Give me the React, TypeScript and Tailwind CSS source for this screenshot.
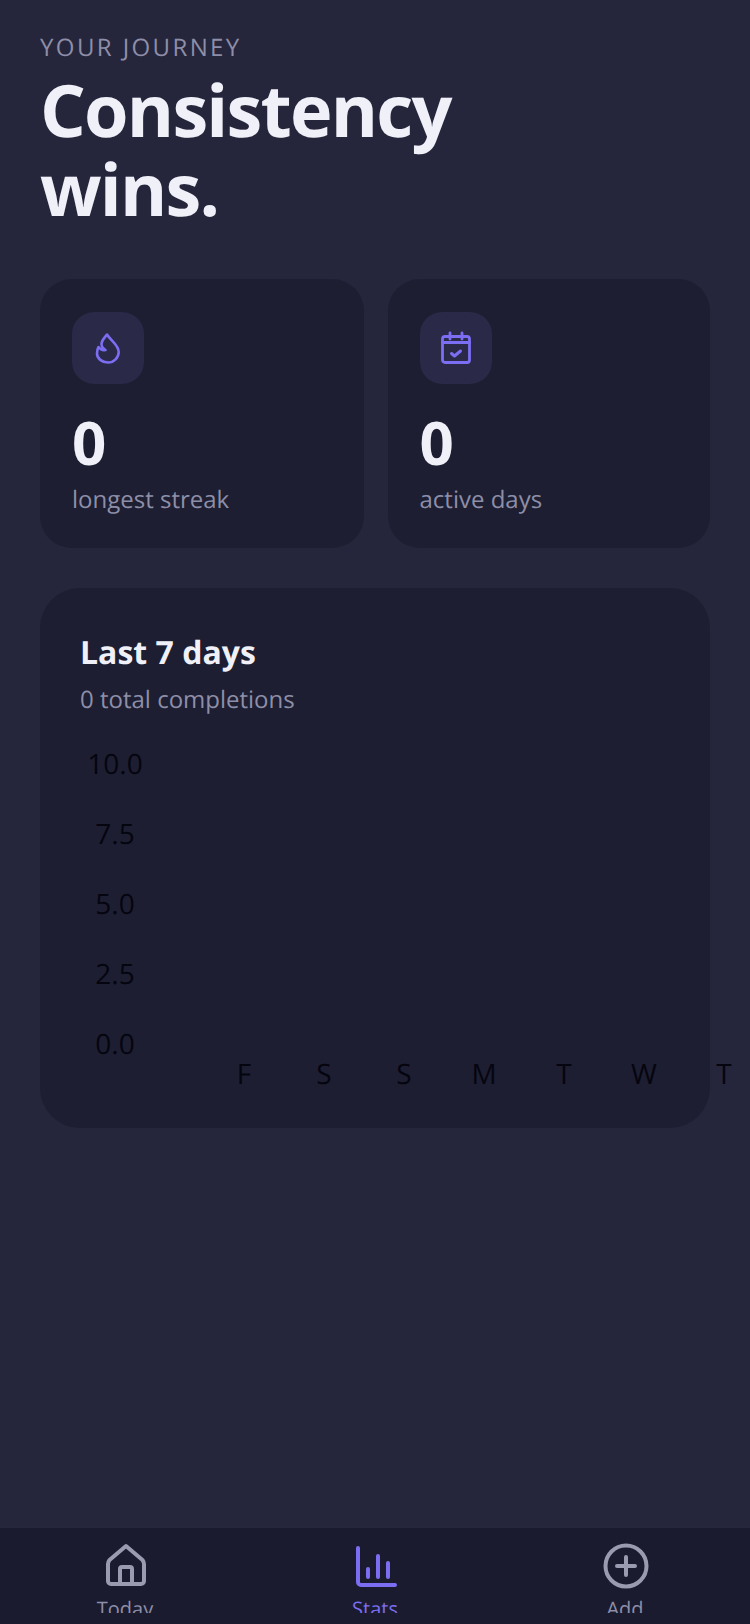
function Flame() {
  return (
    <svg width="30" height="36" viewBox="0 0 30 36" fill="none" stroke="#7c6ef2" strokeWidth="2.600" strokeLinecap="round" strokeLinejoin="round" className="shrink-0">
      <path d="M14 4.500C11.500 8 8.500 10 8.500 14C8.500 16.500 10 18.500 12.500 20C9.500 20.500 7 19 5.500 17C4.300 19 4 21.500 4 23.500C4 28.500 9 32.500 15 32.500C21 32.500 25.700 27.500 25.700 22C25.700 15 18 11 14 4.500Z" />
    </svg>
  );
}

function CalendarCheck() {
  return (
    <svg width="32" height="36" viewBox="0 0 32 36" fill="none" stroke="#7c6ef2" strokeWidth="2.800" strokeLinecap="round" strokeLinejoin="round" className="shrink-0">
      <rect x="2.500" y="6.500" width="27" height="26" rx="2.500" />
      <path d="M2.500 12.500h27M10 3v6M22 3v6" />
      <path d="M11.500 23.500l3 2.500l6-5" strokeWidth="3" />
    </svg>
  );
}

function HomeIcon() {
  return (
    <svg width="46" height="46" viewBox="0 0 46 46" fill="none" stroke="#9a9ab0" strokeWidth="4" strokeLinecap="round" strokeLinejoin="round" className="shrink-0 translate-x-[1px]">
      <path d="M23 3L39.500 17Q41 19 41 21V38a3 3 0 0 1-3 3H8a3 3 0 0 1-3-3V21Q5 19 6.500 17Z" />
      <path d="M17 41V26a2 2 0 0 1 2-2h8a2 2 0 0 1 2 2V41" />
    </svg>
  );
}

function StatsIcon() {
  return (
    <svg width="44" height="46" viewBox="0 0 44 46" fill="none" stroke="#7c6ef2" strokeWidth="4" strokeLinecap="round" strokeLinejoin="round" className="shrink-0">
      <path d="M5 5v34a3 3 0 0 0 3 3h34M15 26v8M25 13v21M35 20v14" />
    </svg>
  );
}

function AddIcon() {
  return (
    <svg width="46" height="46" viewBox="0 0 46 46" fill="none" stroke="#9a9ab0" strokeWidth="4" strokeLinecap="round" strokeLinejoin="round" className="shrink-0 translate-x-[1px]">
      <circle cx="23" cy="23" r="20.500" />
      <path d="M23 14v18M14 23h18" />
    </svg>
  );
}

function StatCard({ icon, value, label, width }: { icon: React.ReactNode; value: string; label: string; width: string }) {
  return (
    <div className={`${width} h-[269px] rounded-[32px] bg-[#1d1e31] pl-[32px] pt-[33px]`}>
      <div className="flex h-[72px] w-[72px] items-center justify-center rounded-[22px] bg-[#2b2948]">{icon}</div>
      <div className="mt-[20px] text-[60px] font-bold leading-[76px] text-[#f0f0f8]">{value}</div>
      <div className="mt-[3px] text-[24px] leading-[33px] text-[#8e8ea8]">{label}</div>
    </div>
  );
}

const yTicks = [
  { t: "10.0", y: 774 },
  { t: "7.5", y: 844 },
  { t: "5.0", y: 914 },
  { t: "2.5", y: 984 },
  { t: "0.0", y: 1054 },
];
const xTicks = [
  { t: "F", x: 244 },
  { t: "S", x: 324 },
  { t: "S", x: 404 },
  { t: "M", x: 484 },
  { t: "T", x: 564 },
  { t: "W", x: 644 },
  { t: "T", x: 724 },
];

function Chart() {
  return (
    <svg width="670" height="360" viewBox="40 745 670 360" className="mt-[29px] -ml-[40px] overflow-visible" fill="#050510" fontSize="28">
      {yTicks.map((d) => (
        <text key={d.t} x={115} y={d.y} textAnchor="middle">{d.t}</text>
      ))}
      {xTicks.map((d, i) => (
        <text key={i} x={d.x} y={1084} textAnchor="middle">{d.t}</text>
      ))}
    </svg>
  );
}

function NavItem({ icon, label, color }: { icon: React.ReactNode; label: string; color: string }) {
  return (
    <div className="flex flex-1 flex-col items-center overflow-hidden pt-[15px]">
      {icon}
      <div className={`mt-[6px] shrink-0 text-[20px] leading-[28px] ${color}`}>{label}</div>
    </div>
  );
}

export default function App() {
  return (
    <div className="flex h-[1624px] w-[750px] flex-col overflow-hidden bg-[#25263b] font-['Open_Sans',sans-serif] [text-rendering:geometricPrecision]">
      <main className="flex-1 px-[40px] pt-[31px]">
        <div className="text-[24px] leading-[33px] tracking-[2.400px] text-[#8e8ea8]">YOUR JOURNEY</div>
        <h1 className="mt-[7px] w-[500px] text-[72px] font-bold leading-[79px] tracking-[-1.800px] text-[#f0f0f8]">Consistency wins.</h1>
        <div className="mt-[50px] flex gap-[24px]">
          <StatCard width="w-[323.500px]" icon={<Flame />} value="0" label="longest streak" />
          <StatCard width="w-[322.500px]" icon={<CalendarCheck />} value="0" label="active days" />
        </div>
        <section className="mt-[40px] h-[540px] rounded-[40px] bg-[#1d1e31] pl-[40px] pt-[43px]">
          <div className="text-[32px] font-bold leading-[44px] text-[#f0f0f8]">Last 7 days</div>
          <div className="mt-[8px] text-[24px] leading-[33px] text-[#8e8ea8]">0 total completions</div>
          <Chart />
        </section>
      </main>
      <nav className="flex h-[97px] border-t border-[#26273d] bg-[#1a1b2e]">
        <div className="flex h-[85px] w-full">
          <NavItem icon={<HomeIcon />} label="Today" color="text-[#8e8ea8]" />
          <NavItem icon={<StatsIcon />} label="Stats" color="text-[#7c6ef2]" />
          <NavItem icon={<AddIcon />} label="Add" color="text-[#8e8ea8]" />
        </div>
      </nav>
    </div>
  );
}
